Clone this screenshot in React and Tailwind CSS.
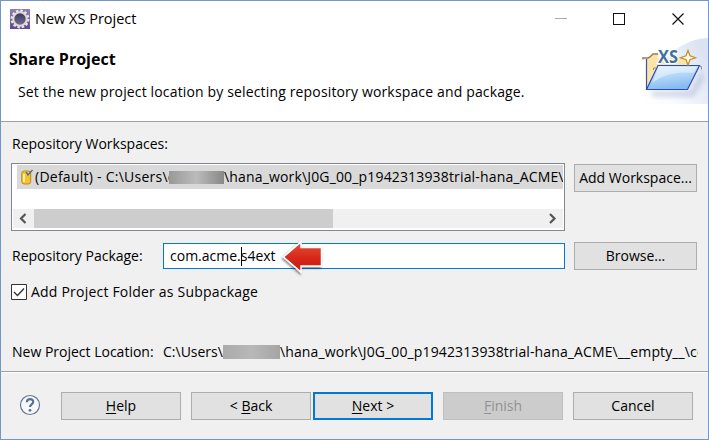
function T({ className = "", children }) {
  return <span className={"whitespace-pre " + className}>{children}</span>;
}

function Button({ className = "", children }) {
  return (
    <button className={"h-7 shrink-0 border text-center leading-[26px] whitespace-pre " + className}>
      {children}
    </button>
  );
}

function GearIcon() {
  return (
    <svg className="ml-[9px] mt-2 h-5 w-5 shrink-0" viewBox="0 0 20 20">
      <defs>
        <linearGradient id="gear" x1="0" y1="0" x2="0" y2="1">
          <stop offset="0" stopColor="#8d80b2" />
          <stop offset="1" stopColor="#624b91" />
        </linearGradient>
        <linearGradient id="core" x1="0" y1="0" x2="0" y2="1">
          <stop offset="0" stopColor="#37335c" />
          <stop offset="1" stopColor="#777291" />
        </linearGradient>
      </defs>
      <rect width="20" height="20" fill="url(#gear)" />
      <circle cx="10" cy="10" r="8.3" fill="none" stroke="#efebe4" strokeWidth="2.2" strokeDasharray="2.5 1.845" />
      <circle cx="10" cy="10" r="6.7" fill="url(#core)" stroke="#dedad5" strokeWidth="2" />
    </svg>
  );
}

function FolderBanner() {
  return (
    <svg className="h-[75px] w-[72px] shrink-0" viewBox="636 30 72 75">
      <defs>
        <linearGradient id="sky" x1="0" y1="0.8" x2="1" y2="0.3">
          <stop offset="0" stopColor="#fff" />
          <stop offset="0.35" stopColor="#fafbfe" />
          <stop offset="1" stopColor="#dae2f3" />
        </linearGradient>
        <linearGradient id="front" x1="0" y1="0" x2="0.3" y2="1">
          <stop offset="0" stopColor="#e4f2fd" />
          <stop offset="0.5" stopColor="#b5d8f8" />
          <stop offset="1" stopColor="#85bbf0" />
        </linearGradient>
        <filter id="soft"><feGaussianBlur stdDeviation="2.5" /></filter>
      </defs>
      <path d="M636 104C650 70 675 39 708 38V104Z" fill="url(#sky)" />
      <path d="M650 91H690L702 70L704 80L694 97H654Z" fill="#8e9cc4" opacity="0.35" filter="url(#soft)" />
      <path d="M647 89V58h3l4-4h5l-2 4h32v8H657Z" fill="#fbe4a8" />
      <path d="M643 59.500v-1.500h5l2-1 3-3h5" fill="none" stroke="#9a7c4c" strokeWidth="1.500" />
      <path d="M646.500 59V89" stroke="#3b52aa" strokeWidth="1.200" />
      <path d="M658 65.500H699.500L687.500 89.500H646.500Z" fill="url(#front)" stroke="#2d49b5" strokeWidth="1.200" />
      <path d="M659 67H697L693 73C676 71 663 75 652 83Z" fill="#fff" opacity="0.4" />
      <path d="M699.500 66.500h2v3M653.500 70v-2h2.500" fill="none" stroke="#8d91a6" />
      <text x="658" y="62.500" fontFamily="Open Sans, sans-serif" fontSize="17" fontWeight="700" fill="#3f709f" stroke="#fff" strokeWidth="2" paintOrder="stroke" textLength="20" lengthAdjust="spacingAndGlyphs">XS</text>
      <path d="M688 50.500l2 5.200 5.500 2-5.500 2-2 5.300-2-5.300-5.500-2 5.500-2Z" fill="#fffae6" stroke="#c28d20" strokeWidth="1.200" />
    </svg>
  );
}

function Arrow() {
  return (
    <svg className="absolute left-[118px] top-[-5px] h-[36px] w-[44px] overflow-visible" viewBox="282 239 44 36">
      <defs>
        <linearGradient id="red" x1="0" y1="0" x2="0" y2="1">
          <stop offset="0" stopColor="#e2533a" />
          <stop offset="0.5" stopColor="#d9291b" />
          <stop offset="1" stopColor="#c71b12" />
        </linearGradient>
        <filter id="shade" x="-20%" y="-20%" width="140%" height="150%">
          <feDropShadow dx="-1" dy="1.500" stdDeviation="1.200" floodOpacity="0.5" />
        </filter>
      </defs>
      <path d="M283.500 257L301 242V247.500H321.500V266H301V272Z" fill="url(#red)" stroke="#fff" strokeWidth="1.500" filter="url(#shade)" />
    </svg>
  );
}

const path = "\\hana_work\\J0G_00_p1942313938trial-hana_ACME\\";

export default function App() {
  return (
    <div className="flex h-[440px] w-[709px] flex-col overflow-hidden border border-[#7596c8] bg-[#f0f0f0] font-['Open_Sans',sans-serif] text-[14px] leading-5 text-black">
      <header className="h-[121px] shrink-0 border-b border-[#a0a0a0] bg-white">
        <div className="flex h-[37px]">
          <GearIcon />
          <T className="ml-[5px] mt-2 text-[14.5px]">New XS Project</T>
          <svg className="ml-auto mt-2 mr-[23px] h-5 w-[132px]" viewBox="553 9 132 20" fill="none" stroke="#111" shapeRendering="crispEdges">
            <path d="M555 18.500h12" stroke="#aaa" />
            <path d="M613.500 13.500h11v11h-11Z" />
            <path d="M672.500 13.500l11 11m0-11l-11 11" shapeRendering="auto" strokeWidth="1.200" />
          </svg>
        </div>
        <div className="flex justify-between">
          <div className="flex flex-col">
            <T className="ml-2 mt-[11px] text-[16px] font-bold">Share Project</T>
            <T className="ml-[17px] mt-[13px] tracking-[0.15px]">Set the new project location by selecting repository workspace and package.</T>
          </div>
          <div className="-mt-2"><FolderBanner /></div>
        </div>
      </header>

      <main className="h-[249px] shrink-0 pl-[10px]">
        <div className="mt-3 h-[29px] pl-px"><T>Repository Workspaces:</T></div>
        <div className="flex">
          <div className="flex h-[68px] w-[554px] flex-col justify-between border border-[#828790] bg-white px-px pt-px pb-[2px]">
            <div className="ml-1 flex h-6 items-center overflow-hidden bg-[#d9d9d9]">
              <svg className="ml-1 h-4 w-3 shrink-0" viewBox="0 0 12 16">
                <rect x="0.700" y="2" width="9" height="13" rx="2.500" fill="#f4c22b" stroke="#c18a19" />
                <path d="M3 5v8" stroke="#fff2a8" strokeWidth="2" />
                <path d="M5 3l2 3 4.500-5" fill="none" stroke="#49639b" strokeWidth="1.300" />
              </svg>
              <T className="ml-[2px] w-[134px] shrink-0 overflow-hidden tracking-[0.25px]">{"(Default) - C:\\Users\\c"}</T>
              <span className="h-[13px] w-[55px] shrink-0 bg-linear-to-r from-[#999] via-[#bbb] to-[#888]" />
              <T className="tracking-[0.16px]">{path}</T>
            </div>
            <div className="flex h-[19px] items-center bg-[#f0f0f0]">
              <svg className="h-full w-[21px]" viewBox="0 0 21 19" fill="none" stroke="#555" strokeWidth="2.2"><path d="M12.500 5L8 9.500l4.500 4.500" /></svg>
              <span className="h-full w-[299px] bg-[#cdcdcd]" />
              <svg className="ml-auto h-full w-[21px]" viewBox="0 0 21 19" fill="none" stroke="#555" strokeWidth="2.2"><path d="M8 5l4.500 4.500L8 14" /></svg>
            </div>
          </div>
          <Button className="ml-[9px] mt-px w-[123px] border-[#adadad] bg-[#e1e1e1]">Add Workspace...</Button>
        </div>
        <div className="mt-[11px] flex h-7 items-center">
          <T className="w-[152px] pl-px">Repository Package:</T>
          <div className="relative h-[26px] w-[402px] border border-[#0078d7] bg-white pl-[6px] leading-6">
            <T>com.acme.s4ext</T>
            <span className="absolute left-[77px] top-[3px] h-[19px] w-px bg-black" />
            <Arrow />
          </div>
          <Button className="ml-[9px] w-[123px] border-[#adadad] bg-[#e1e1e1]">Browse...</Button>
        </div>
        <div className="mt-3 flex h-5 items-center">
          <svg className="h-4 w-4" viewBox="0 0 16 16"><path d="M.5.5h15v15H.5Z" fill="#fff" stroke="#333" /><path d="M3 8l3.500 3.500L13 4.500" fill="none" stroke="#333" strokeWidth="1.400" /></svg>
          <T className="ml-1 tracking-[0.21px]">Add Project Folder as Subpackage</T>
        </div>
        <div className="mt-10 flex h-5 w-[687px] items-center overflow-hidden">
          <T className="w-[152px] shrink-0 pl-px">New Project Location:</T>
          <T className="w-[60px] shrink-0">{"C:\\Users\\"}</T>
          <span className="h-[14px] w-[57px] shrink-0 bg-linear-to-r from-[#aaa] via-[#b8b8b8] to-[#a5a5a5]" />
          <T className="tracking-[0.12px]">{path + "__empty__\\co"}</T>
        </div>
      </main>

      <footer className="flex flex-1 items-start border-t border-[#a0a0a0] pt-5 shadow-[inset_0_1px_0_#fff]">
        <svg className="ml-[18px] mt-[2px] h-[22px] w-[22px]" viewBox="0 0 22 22">
          <circle cx="11" cy="11" r="9.500" fill="#f8f8fa" stroke="#657798" strokeWidth="1.200" />
          <path d="M7.800 8.300C8 3.800 14.500 4.300 14.200 8c-.2 2.500-3.200 2.400-3.200 5" fill="none" stroke="#596f9a" strokeWidth="2.200" />
          <circle cx="11" cy="16.300" r="1.400" fill="#596f9a" />
        </svg>
        <Button className="ml-5 w-[120px] border-[#adadad] bg-[#e1e1e1]"><u className="underline-offset-2">H</u>elp</Button>
        <Button className="ml-[10px] w-[120px] border-[#adadad] bg-[#e1e1e1]">&lt; <u className="underline-offset-2">B</u>ack</Button>
        <Button className="ml-[2px] w-[120px] border-2! border-[#0078d7] bg-[#e1e1e1] leading-6!"><u className="underline-offset-2">N</u>ext &gt;</Button>
        <Button className="ml-[10px] w-[120px] border-[#bfbfbf] bg-[#ccc] text-[#929292]"><u className="underline-offset-2">F</u>inish</Button>
        <Button className="ml-[10px] w-[120px] border-[#adadad] bg-[#e1e1e1]">Cancel</Button>
      </footer>
    </div>
  );
}
